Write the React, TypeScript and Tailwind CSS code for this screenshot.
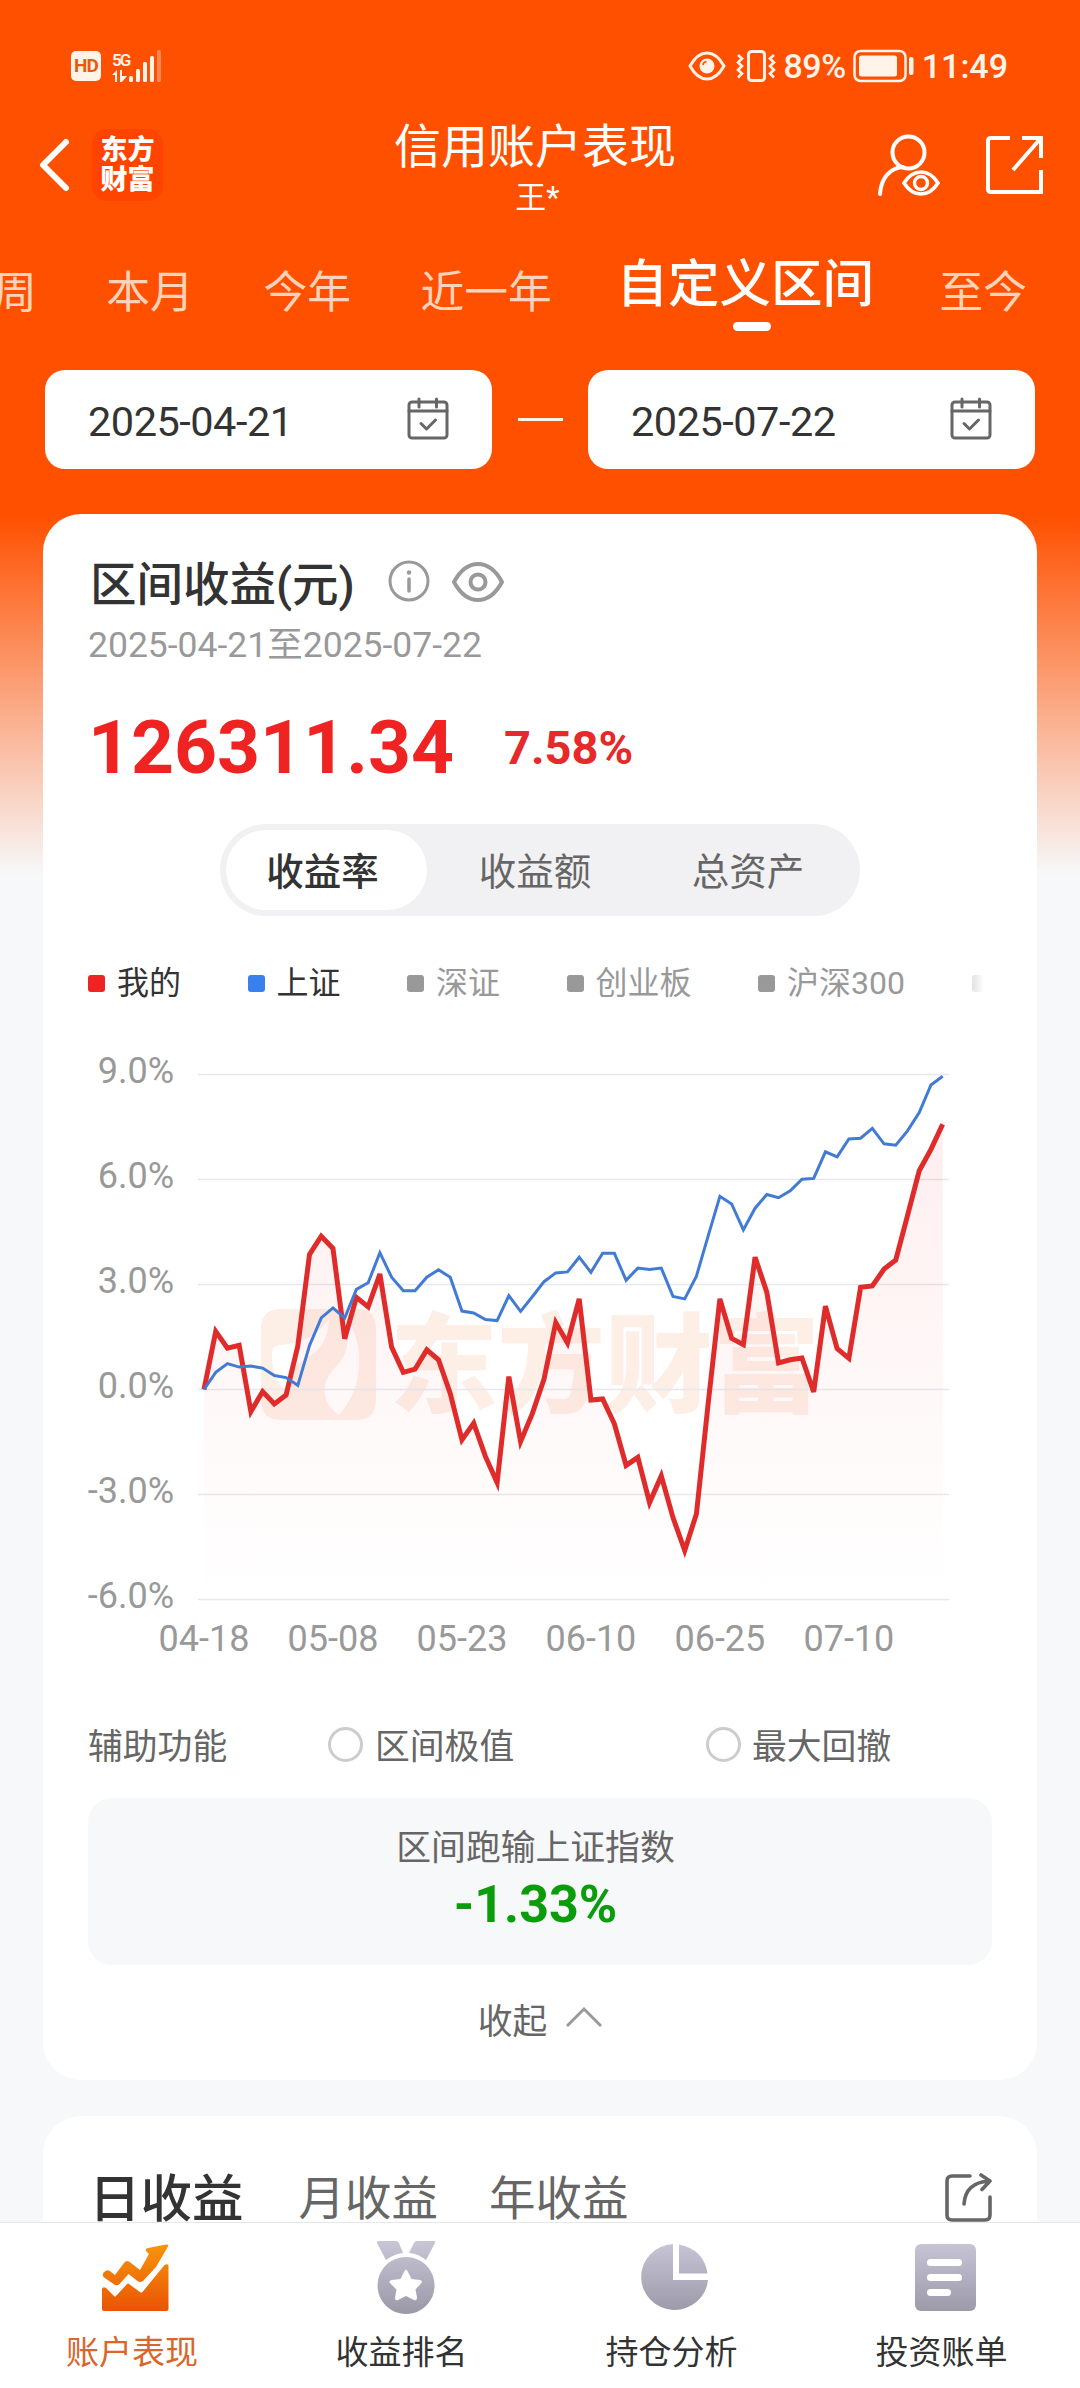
const mine = [
  0, 1.66, 1.18, 1.26, -0.63, -0.06, -0.41, -0.16, 1.24, 3.86, 4.38, 4.03, 1.45, 2.63, 2.36, 3.3,
  1.21, 0.49, 0.58, 1.13, 0.85, -0.11, -1.44, -0.96, -1.91, -2.66, 0.37, -1.49, -0.69, 0.3, 1.91, 1.33,
  2.59, -0.3, -0.27, -0.98, -2.17, -1.94, -3.23, -2.47, -3.66, -4.6, -3.55, -0.4, 2.59, 1.46, 1.28, 3.78,
  2.78, 0.76, 0.85, 0.9, -0.07, 2.38, 1.17, 0.89, 2.92, 2.96, 3.44, 3.7, 4.97, 6.25, 6.86, 7.58,
];
const shanghai = [
  0, 0.49, 0.74, 0.64, 0.67, 0.61, 0.4, 0.34, 0.12, 1.26, 2.05, 2.33, 2.04, 2.86, 3.05, 3.91,
  3.21, 2.82, 2.82, 3.21, 3.42, 3.21, 2.24, 2.19, 2, 1.97, 2.68, 2.23, 2.65, 3.08, 3.33, 3.36,
  3.78, 3.35, 3.89, 3.89, 3.12, 3.47, 3.43, 3.47, 2.66, 2.59, 3.24, 4.39, 5.52, 5.3, 4.56, 5.18,
  5.57, 5.48, 5.68, 6.01, 6.03, 6.79, 6.65, 7.16, 7.18, 7.46, 7.02, 6.98, 7.39, 7.91, 8.7, 8.95,
];
const yTicks = [9, 6, 3, 0, -3, -6];
const xTicks = ["04-18", "05-08", "05-23", "06-10", "06-25", "07-10"];

const px = (i: number) => 116 + i * 11.725;
const py = (v: number) => 349.5 - v * 35;
const toPoints = (data: number[]) => data.map((v, i) => `${px(i)},${py(v).toFixed(1)}`).join(" ");

function StatusBar() {
  return (
    <div className="flex h-[100px] items-center justify-between pt-[31px] pr-[72px] pl-[71px] text-[#fff3ea]">
      <div className="flex items-center gap-[11px]">
        <div className="flex h-[30px] w-[30px] items-center justify-center rounded-[5px] bg-[#fff3ea] text-[19px] font-bold leading-[30px] tracking-[-1px] text-[#e8590c]">
          HD
        </div>
        <div className="flex h-[34px] items-end">
          <div className="flex w-[17px] flex-col items-start">
            <span className="text-[17px] font-semibold leading-[18px] tracking-[-2px]">5G</span>
            <svg width="15" height="14" viewBox="0 0 15 14" fill="currentColor">
              <path d="M0 6l5-5v12H3V6zM8 1h2v6h5l-5 6H8z" />
            </svg>
          </div>
          <svg width="33" height="34" viewBox="17 0 33 34" fill="currentColor">
            <rect x="17" y="27" width="4" height="6" rx="1.500" />
            <rect x="24" y="20" width="4" height="13" rx="1.500" />
            <rect x="31" y="13" width="4" height="20" rx="1.500" />
            <rect x="38" y="7" width="4" height="26" rx="1.500" />
            <rect x="45" y="1" width="4" height="32" rx="1.500" opacity="0.35" />
          </svg>
        </div>
      </div>
      <div className="flex items-center">
        <svg width="38" height="30" viewBox="0 0 38 30" fill="none" stroke="currentColor" strokeWidth="3">
          <path d="M2 15C7 6 13 2 19 2s12 4 17 13c-5 9-11 13-17 13S7 24 2 15z" />
          <circle cx="19" cy="15" r="7.500" fill="currentColor" stroke="none" />
          <path d="M15 14c0-2 1-3 3.500-3.500" stroke="#ff5000" strokeWidth="1.600" />
        </svg>
        <svg className="ml-[10px]" width="40" height="34" viewBox="0 0 40 34" fill="none" stroke="currentColor" strokeWidth="3">
          <rect x="12.500" y="2.500" width="16" height="29" rx="3" />
          <path d="M2 6l4 3.500-4 4 4 3.500-4 4 4 3.500-4 4M38 6l-4 3.500 4 4-4 3.500 4 4-4 3.500 4 4" strokeWidth="2.600" />
        </svg>
        <span className="ml-[8px] text-[34px] font-medium leading-none tracking-[-0.5px]">89%</span>
        <svg className="ml-[7px]" width="62" height="34" viewBox="0 0 62 34" fill="none" stroke="currentColor">
          <rect x="1.500" y="2" width="51" height="30" rx="6" strokeWidth="2.500" />
          <rect x="6" y="6.500" width="38" height="21" rx="2.500" fill="currentColor" stroke="none" />
          <rect x="56" y="8" width="4.500" height="18" rx="2" fill="currentColor" stroke="none" />
        </svg>
        <span className="ml-[7px] text-[34px] font-medium leading-none">11:49</span>
      </div>
    </div>
  );
}

function Header() {
  return (
    <div className="flex h-[130px] items-center pr-[36px] pl-[38px] text-white">
      <div className="flex flex-1 items-center">
        <svg width="34" height="56" viewBox="0 0 34 56" fill="none" stroke="currentColor" strokeWidth="6" strokeLinecap="round" strokeLinejoin="round">
          <path d="M28 5L5 28l23 23" />
        </svg>
        <div className="ml-[20px] flex h-[72px] w-[71px] flex-col items-center justify-center rounded-[15px] bg-[#ff4400] text-[27px] font-black leading-[30px]">
          <span>东方</span>
          <span>财富</span>
        </div>
      </div>
      <div className="pt-[9px] pr-[7px] text-center">
        <h1 className="pr-[5px] text-[47px] leading-[56px]">信用账户表现</h1>
        <p className="text-[31px] leading-[46px]">王*</p>
      </div>
      <div className="flex flex-1 items-center justify-end gap-[45px]">
        <svg width="64" height="64" viewBox="0 0 64 64" fill="none" stroke="currentColor" strokeWidth="4" strokeLinecap="round">
          <circle cx="32.500" cy="19.500" r="16" />
          <path d="M4 61c1-15 9-26 23-27" />
          <path d="M28 50c5-8 10-11 17-11s12 3 17 11c-5 8-10 11-17 11s-12-3-17-11z" strokeWidth="3.600" />
          <circle cx="45" cy="50" r="6.500" strokeWidth="3.400" />
        </svg>
        <svg width="59" height="60" viewBox="0 0 59 60" fill="none" stroke="currentColor" strokeWidth="4">
          <path d="M25 3H6Q3 3 3 6v48q0 3 3 3h50V35" />
          <path d="M37 3h19v20M56 3L28 35" />
        </svg>
      </div>
    </div>
  );
}

function RangeTabs() {
  return (
    <div className="-ml-[7px] flex h-[120px] items-center gap-[69.500px] pt-[7px] text-[43.800px] whitespace-nowrap text-[#ffd3bb]">
      <span>周</span>
      <span>本月</span>
      <span>今年</span>
      <span>近一年</span>
      <span className="relative -mt-[17px] -ml-[5px] text-[51.500px] font-medium text-white">
        自定义区间
        <i className="absolute -bottom-[7px] left-[117px] h-[9px] w-[38px] rounded-full bg-white" />
      </span>
      <span className="-ml-[4px]">至今</span>
    </div>
  );
}

function DateField({ value }: { value: string }) {
  return (
    <div className="flex h-[99px] w-[447px] items-center justify-between rounded-[20px] bg-white pr-[43px] pl-[43px]">
      <span className="pt-[4px] text-[41.500px] leading-none tracking-[-0.5px] text-[#333]">{value}</span>
      <svg className="-mt-[4px]" width="42" height="44" viewBox="0 0 42 44" fill="none" stroke="#666" strokeWidth="3" strokeLinecap="round" strokeLinejoin="round">
        <rect x="2" y="6" width="38" height="36" rx="3" />
        <path d="M2 15h38M12 3v8M29.500 3v8M14 27.500l5.500 5.500 9-9" />
      </svg>
    </div>
  );
}

function Legend() {
  return (
    <div className="mt-[47px] flex h-[40px] w-[896px] items-center gap-[66.500px] overflow-hidden text-[32px] leading-[42px] whitespace-nowrap text-[#999]">
      <span className="flex items-center gap-[12px] text-[#333]"><i className="h-[17px] w-[17px] rounded-[3px] bg-[#f02323]" />我的</span>
      <span className="flex items-center gap-[12px] text-[#333]"><i className="h-[17px] w-[17px] rounded-[3px] bg-[#3a7ff0]" />上证</span>
      <span className="flex items-center gap-[12px]"><i className="h-[17px] w-[17px] rounded-[3px] bg-[#999]" />深证</span>
      <span className="flex items-center gap-[12px]"><i className="h-[17px] w-[17px] rounded-[3px] bg-[#999]" />创业板</span>
      <span className="flex items-center gap-[12px]"><i className="h-[17px] w-[17px] rounded-[3px] bg-[#999]" />沪深300</span>
      <i className="h-[17px] w-[12px] shrink-0 rounded-l-[3px] bg-linear-to-r from-[#e2e2e2] to-white" />
    </div>
  );
}

function Chart() {
  return (
    <svg className="mt-[37px] block" width="904" height="640" viewBox="0 0 904 640" fill="none">
      <defs>
        <linearGradient id="area" x1="0" y1="83" x2="0" y2="559" gradientUnits="userSpaceOnUse">
          <stop offset="0" stopColor="#f02323" stopOpacity="0.075" />
          <stop offset="1" stopColor="#f02323" stopOpacity="0" />
        </linearGradient>
      </defs>

      {/* 水印 */}
      <g fill="#fdeee6">
        <path fillRule="evenodd" d="M193 269h75q20 0 20 20v71q0 20-20 20h-75q-20 0-20-20v-71q0-20 20-20zM184 312q1-6 8-7c25-2 38-11 49-26-1 19-7 30-21 38-14 8-21 18-23 33-10-9-14-24-13-38zM259 279c14 20 17 51 4 79q-6 10-12 17c-12-8-17-20-13-33 5-14 18-19 21-36q2-12 0-27z" />
        <text x="302" y="364" fontSize="108" fontWeight="900" textLength="430" lengthAdjust="spacingAndGlyphs">东方财富</text>
      </g>

      <g stroke="#e6e8ee" strokeWidth="1.500">
        {yTicks.map((t) => (
          <line key={t} x1="110" x2="861" y1={py(t)} y2={py(t)} />
        ))}
      </g>
      <polygon points={`116,559 ${toPoints(mine)} 854.700,559`} fill="url(#area)" />
      <polyline points={toPoints(mine)} stroke="#e02b2b" strokeWidth="5" />
      <polyline points={toPoints(shanghai)} stroke="#417bd3" strokeWidth="3" />

      <g fill="#999" fontSize="36">
        {yTicks.map((t) => (
          <text key={t} x="86" y={py(t) + 8.5} textAnchor="end">{t.toFixed(1)}%</text>
        ))}
        {xTicks.map((t, i) => (
          <text key={t} x={px(i * 11)} y="611" textAnchor="middle">{t}</text>
        ))}
      </g>
    </svg>
  );
}

function ProfitCard() {
  return (
    <section className="mx-[43px] mt-[45px] h-[1566px] rounded-[38px] bg-white px-[45px] pt-[36px]">
      <div className="flex h-[68px] items-center">
        <h2 className="pt-[2px] pl-[2px] text-[46.500px] font-medium leading-[68px] text-[#333]">区间收益(元)</h2>
        <svg className="ml-[33px] -mt-[6px]" width="42" height="42" viewBox="0 0 42 42" fill="none" stroke="#999" strokeWidth="3" strokeLinecap="round">
          <circle cx="21" cy="21" r="19" />
          <path d="M21 19v12" strokeWidth="3.500" />
          <circle cx="21" cy="12.500" r="2.200" fill="#999" stroke="none" />
        </svg>
        <svg className="ml-[22px] -mt-[5px]" width="52" height="42" viewBox="0 0 52 42" fill="none" stroke="#999" strokeWidth="4">
          <path d="M2 21C9 8 18 3 26 3s17 5 24 18c-7 13-16 18-24 18S9 34 2 21z" strokeLinejoin="round" />
          <circle cx="26" cy="21" r="7.500" />
        </svg>
      </div>
      <p className="h-[50px] text-[35.500px] leading-[54px] text-[#999]">2025-04-21至2025-07-22</p>
      <div className="mt-[29px] flex h-[100px] items-center font-bold text-[#f02323]">
        <span className="text-[75px] leading-none">126311.34</span>
        <span className="ml-[50px] text-[47px] leading-none text-[#e62a2a]">7.58%</span>
      </div>

      <div className="mx-auto mt-[27px] flex h-[92px] w-[640px] items-center rounded-full bg-[#f1f1f4] px-[6px] text-[37.500px] text-[#666]">
        <span className="flex h-[80px] w-[201px] items-center justify-center rounded-full bg-white pt-[4px] pr-[8px] font-medium text-[#333]">收益率</span>
        <span className="w-[213px] pt-[4px] pl-[3px] text-center">收益额</span>
        <span className="w-[213px] pt-[4px] pl-[3px] text-center">总资产</span>
      </div>

      <Legend />
      <Chart />

      <div className="mt-[40px] flex h-[50px] items-center text-[34.800px] leading-[54px] text-[#666]">
        <span className="w-[240px] pt-[3px]">辅助功能</span>
        <span className="flex w-[378px] items-center gap-[12px]"><i className="-mt-[1px] h-[35px] w-[35px] rounded-full border-3 border-[#ccc]" /><b className="pt-[3px] font-normal">区间极值</b></span>
        <span className="flex items-center gap-[11px]"><i className="-mt-[1px] h-[35px] w-[35px] rounded-full border-3 border-[#ccc]" /><b className="pt-[3px] font-normal">最大回撤</b></span>
      </div>

      <div className="mt-[28px] flex h-[167px] flex-col items-center rounded-[24px] bg-[#f7f8fa] pt-[25px] pr-[9px]">
        <span className="text-[34.800px] leading-[50px] text-[#666]">区间跑输上证指数</span>
        <span className="text-[52px] font-bold leading-[64px] text-[#0a9c0a]">-1.33%</span>
      </div>

      <div className="flex h-[111px] items-center justify-center gap-[19px] text-[34.800px] text-[#666]">
        <span className="pt-[3px]">收起</span>
        <svg className="-mt-[8px]" width="36" height="22" viewBox="0 0 36 22" fill="none" stroke="#999" strokeWidth="3">
          <path d="M1 20L18 3l17 17" />
        </svg>
      </div>
    </section>
  );
}

function DailyCard() {
  return (
    <section className="mx-[43px] mt-[36px] flex h-[200px] items-start rounded-t-[38px] bg-white pt-[43px] pr-[45px] pl-[46px]">
      <div className="flex h-[80px] flex-1 items-center pt-[2px] text-[46.500px] text-[#666]">
        <span className="text-[51.500px] font-medium text-[#333]">日收益</span>
        <span className="ml-[55px]">月收益</span>
        <span className="ml-[51px]">年收益</span>
      </div>
      <svg className="mt-[13px]" width="48" height="50" viewBox="0 0 48 50" fill="none" stroke="#666" strokeWidth="3.600" strokeLinecap="round" strokeLinejoin="round">
        <path d="M26 4H8Q3 4 3 9v34q0 5 5 5h33q5 0 5-5V25" />
        <path d="M20 32c1-14 9-22 25-23M37 3l9 6-8 8.500" />
      </svg>
    </section>
  );
}

function BottomNav() {
  return (
    <nav className="flex h-[166px] shrink-0 border-t border-[#e5e7e9] bg-white pt-[14px] text-center text-[33px] leading-[48px] text-[#333]">
      <svg className="absolute h-0 w-0">
        <defs>
          <linearGradient id="orange" x1="0" y1="7" x2="0" y2="73" gradientUnits="userSpaceOnUse">
            <stop offset="0" stopColor="#f8950c" />
            <stop offset="1" stopColor="#ea5504" />
          </linearGradient>
          <linearGradient id="gray" x1="0" y1="5" x2="0" y2="76" gradientUnits="userSpaceOnUse">
            <stop offset="0" stopColor="#c8c6d6" />
            <stop offset="1" stopColor="#9b99a8" />
          </linearGradient>
        </defs>
      </svg>
      <div className="w-[270px] text-[#d9662b]">
        <svg className="mx-auto" width="80" height="80" viewBox="0 0 80 80" fill="url(#orange)">
          <path d="M9 74q-2 0-2-2V52q1-3 4-1l8 8q1 1 2 0l11-12q1-1 2 0l11 8q1.500 1 2.500 0l22-27q4-2 4 1v43q0 2-2 2z" />
          <path d="M8.500 40q-2-4 2-6 3-2 5.500 1l4 3 9-12q3-4 7 0l9 7L54 17l-3-3q-1-2.500 2-3l18-3.500q3-.5 2 2L61 30 48 44q-3 2-5.500 0l-9-7-9 10q-3 2.500-6 0z" />
        </svg>
        <div className="mt-[12px] pr-[6px]">账户表现</div>
      </div>
      <div className="w-[270px]">
        <svg className="mx-auto" width="80" height="80" viewBox="0 0 80 80" fill="url(#gray)">
          <path d="M14 4h17q2 0 3 2l4 10q-9 1-17 7L12 6q-.5-2 2-2zM69 4H52q-2 0-3 2l-5 10q10 1 17 7l9-17q1-2-1-2z" />
          <path fillRule="evenodd" d="M41 20a28.500 28.500 0 1 0 .1 0zM39.500 34q1.500-3 3 0l4 8 8.500 1q3.500 1 1 3.500l-5.500 6 1.500 8q0 3.500-3 2.500l-8-4-8 4q-3 1-3-2.500l1.500-8-6-6q-2.500-2.500 1-3.500l9-1z" />
        </svg>
        <div className="mt-[12px] pr-[7px]">收益排名</div>
      </div>
      <div className="w-[270px]">
        <svg className="mx-auto" width="80" height="80" viewBox="0 0 80 80" fill="url(#gray)">
          <path d="M38 7v36h35a33.500 33 0 1 1-35-36z" />
          <path d="M44 7.500q25 5 28.500 29H44z" />
        </svg>
        <div className="mt-[12px] pr-[7px]">持仓分析</div>
      </div>
      <div className="w-[270px]">
        <svg className="mx-auto" width="80" height="80" viewBox="0 0 80 80" fill="url(#gray)">
          <rect x="10" y="7" width="61" height="67" rx="6" />
          <g fill="#fff">
            <rect x="22" y="22" width="35" height="7" rx="3.500" />
            <rect x="22" y="37" width="35" height="7" rx="3.500" />
            <rect x="22" y="52" width="24" height="7" rx="3.500" />
          </g>
        </svg>
        <div className="mt-[12px] pr-[7px]">投资账单</div>
      </div>
    </nav>
  );
}

export default function App() {
  return (
    <div className="flex h-[2388px] w-[1080px] flex-col overflow-hidden bg-[#f7f8fa] font-[Roboto,'Noto_Sans_CJK_SC',sans-serif]">
      <main className="min-h-0 flex-1 overflow-hidden bg-[linear-gradient(to_bottom,#ff5000_0,#ff5000_515px,#f7f8fa_875px)]">
        <StatusBar />
        <Header />
        <RangeTabs />
        <div className="mt-[20px] flex items-center justify-between px-[45px]">
          <DateField value="2025-04-21" />
          <i className="h-[3px] w-[45px] bg-[#fff3ea]" />
          <DateField value="2025-07-22" />
        </div>
        <ProfitCard />
        <DailyCard />
      </main>
      <BottomNav />
    </div>
  );
}
